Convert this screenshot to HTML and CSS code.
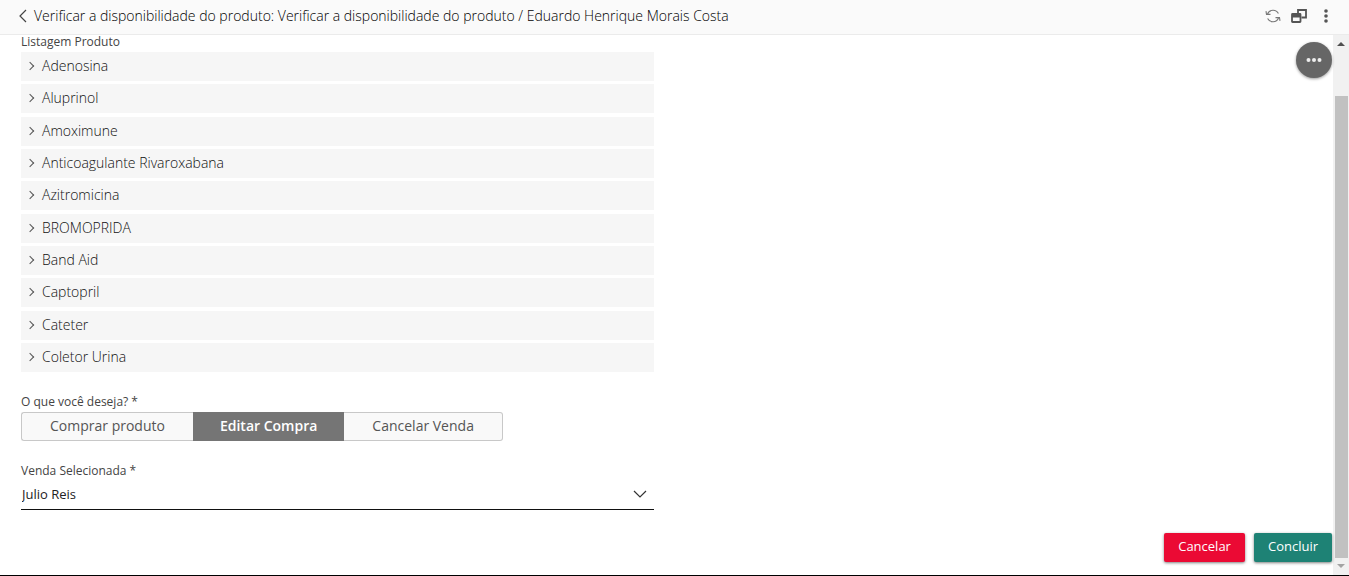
FILE: index.html
```html
<!DOCTYPE html>
<html lang="pt-BR">
<head>
<meta charset="utf-8">
<title>Verificar a disponibilidade do produto</title>
<link rel="stylesheet" href="styles.css">
</head>
<body>
<div class="page">
  <header class="topbar">
    <button class="icon-btn back" type="button" aria-label="Voltar"><svg width="10" height="14" viewBox="0 0 10 14"><path d="M8 1 2 7l6 6" fill="none" stroke="#444" stroke-width="1.2"/></svg></button>
    <h1 class="title">Verificar a disponibilidade do produto: Verificar a disponibilidade do produto / Eduardo Henrique Morais Costa</h1>
    <div class="tools">
      <button class="icon-btn" type="button" aria-label="Atualizar"><svg width="16" height="14" viewBox="0 0 16 14" fill="none" stroke="#777" stroke-width="1.1"><path d="M2.500 5A6 6 0 0 1 13.400 4.500M13.500 9A6 6 0 0 1 2.600 9.500M1 2.200 1.500 5.400H5.500M15 11.800 14.500 8.600H10.500"/></svg></button>
      <button class="icon-btn" type="button" aria-label="Abrir em nova janela"><svg width="16" height="14" viewBox="0 0 16 14"><path d="M7 4V1h8v7.500h-4.500" fill="none" stroke="#555" stroke-width="1.8"/><rect x="1" y="5" width="8.500" height="8" rx=".5" fill="#fafafa" stroke="#555" stroke-width="1.800"/><path d="M1 5h8.500v3.500H1z" fill="#555"/></svg></button>
      <button class="icon-btn" type="button" aria-label="Mais opções"><svg width="4" height="14" viewBox="0 0 4 14" fill="#555"><circle cx="2" cy="2" r="1.800"/><circle cx="2" cy="7" r="1.800"/><circle cx="2" cy="12" r="1.800"/></svg></button>
    </div>
  </header>
  <div class="body">
    <main class="content">
      <form class="form" id="form">
        <section class="field">
          <h2 class="label">Listagem Produto</h2>
          <div class="products">
            <button class="product" type="button"><span class="chevron"></span>Adenosina</button>
            <button class="product" type="button"><span class="chevron"></span>Aluprinol</button>
            <button class="product" type="button"><span class="chevron"></span>Amoximune</button>
            <button class="product" type="button"><span class="chevron"></span>Anticoagulante Rivaroxabana</button>
            <button class="product" type="button"><span class="chevron"></span>Azitromicina</button>
            <button class="product" type="button"><span class="chevron"></span>BROMOPRIDA</button>
            <button class="product" type="button"><span class="chevron"></span>Band Aid</button>
            <button class="product" type="button"><span class="chevron"></span>Captopril</button>
            <button class="product" type="button"><span class="chevron"></span>Cateter</button>
            <button class="product" type="button"><span class="chevron"></span>Coletor Urina</button>
          </div>
        </section>
        <section class="field">
          <h2 class="label" id="wish">O que você deseja? *</h2>
          <div class="options" role="group" aria-labelledby="wish">
            <button class="option" type="button">Comprar produto</button>
            <button class="option selected" type="button" aria-pressed="true">Editar Compra</button>
            <button class="option" type="button">Cancelar Venda</button>
          </div>
        </section>
        <section class="field">
          <label class="label" for="sale">Venda Selecionada *</label>
          <div class="select-box">
            <select class="select" id="sale"><option>Julio Reis</option></select>
            <svg class="arrow" width="14" height="8" viewBox="0 0 14 8"><path d="M1 1l6 6 6-6" fill="none" stroke="#333" stroke-width="1.200"/></svg>
          </div>
        </section>
      </form>
      <button class="fab" type="button" aria-label="Ações"><svg width="16" height="4" viewBox="0 0 16 4" fill="#eee"><circle cx="2.500" cy="2" r="2"/><circle cx="8" cy="2" r="2"/><circle cx="13.500" cy="2" r="2"/></svg></button>
      <footer class="actions">
        <button class="action cancel" type="button">Cancelar</button>
        <button class="action finish" type="submit" form="form">Concluir</button>
      </footer>
    </main>
    <div class="scrollbar" aria-hidden="true">
      <span class="tri up"></span>
      <span class="thumb"></span>
      <span class="tri down"></span>
    </div>
  </div>
</div>
</body>
</html>
```

FILE: styles.css
```css
* { box-sizing: border-box; }
body {
  margin: 0;
  background: #fff;
  color: #222;
  font-family: "Open Sans", sans-serif;
  font-size: 14px;
}
button, select { font: inherit; color: inherit; }
button { margin: 0; padding: 0; border: 0; cursor: pointer; }
svg { display: block; }

.page {
  display: flex;
  flex-direction: column;
  min-height: 100vh;
  border-bottom: 1px solid #000;
}
.topbar {
  display: flex;
  align-items: center;
  padding: 5px 21px 7px 18px;
  background: #fafafa;
  border-bottom: 1px solid #ebebeb;
}
.icon-btn { background: none; }
.back { margin-right: 6px; }
.title {
  flex: 1;
  margin: 0;
  font-size: 14px;
  font-weight: 300;
  line-height: 22px;
  color: #000;
}
.tools { display: flex; align-items: center; gap: 10px; }
.tools .icon-btn:last-child { margin-left: 7px; }

.body { display: flex; flex: 1; }
.content {
  position: relative;
  display: flex;
  flex: 1;
  flex-direction: column;
  justify-content: space-between;
}
.form {
  display: grid;
  grid-template-columns: 1fr 1fr;
  column-gap: 25px;
  row-gap: 23px;
  padding: 0 21px;
}
.field { grid-column: 1; }
.label {
  display: block;
  margin: 0;
  padding-bottom: 3px;
  font-size: 12px;
  font-weight: 400;
  line-height: 14px;
  color: #444;
}
.products {
  display: flex;
  flex-direction: column;
  justify-content: space-between;
  min-height: 320px;
}
.product {
  display: flex;
  align-items: center;
  gap: 9px;
  padding: 0 0 1px 7px;
  background: #f6f6f6;
  color: #111;
  font-weight: 300;
  line-height: 28px;
  text-align: left;
}
.chevron {
  width: 6px;
  height: 6px;
  margin-left: -1px;
  border: solid #555;
  border-width: 1px 1px 0 0;
  transform: rotate(45deg);
}

.options { display: flex; }
.option {
  padding: 0 28px 2px;
  background: #f9f9f9;
  border: 1px solid #c8c8c8;
  color: #555;
  line-height: 25px;
}
.option:first-child { border-right: 0; border-radius: 3px 0 0 3px; }
.option:last-child { border-left: 0; border-radius: 0 3px 3px 0; }
.option.selected {
  padding: 0 26px 2px;
  background: #757575;
  border-color: #757575;
  color: #fff;
  font-weight: 600;
}

.select-box { position: relative; }
.select {
  display: block;
  width: 100%;
  height: 29px;
  padding: 0 32px 3px 1px;
  appearance: none;
  background: none;
  border: 0;
  border-bottom: 1px solid #111;
  border-radius: 0;
  font-size: 13px;
  outline: 0;
}
.arrow { position: absolute; right: 7px; top: 9px; pointer-events: none; }

.fab {
  position: absolute;
  top: 7px;
  right: 1px;
  display: grid;
  place-items: center;
  width: 36px;
  height: 36px;
  border-radius: 50%;
  background: #666;
  box-shadow: 0 1px 3px rgba(0, 0, 0, .4);
}

.actions {
  display: flex;
  justify-content: flex-end;
  gap: 9px;
  padding: 0 1px 13px 0;
}
.action {
  padding: 0 14px 2px;
  border-radius: 2px;
  color: #fff;
  font-size: 13px;
  line-height: 27px;
  box-shadow: 0 1px 3px rgba(0, 0, 0, .5);
}
.cancel { background: #eb0a34; }
.finish { background: #1e8275; }

.scrollbar {
  display: flex;
  flex-direction: column;
  align-items: center;
  justify-content: space-between;
  width: 16px;
  padding: 7px 0;
  background: #f1f1f1;
}
.tri { border: 4px solid transparent; }
.up { border-top: 0; border-bottom-color: #505050; }
.down { border-bottom: 0; border-top-color: #a3a3a3; }
.thumb {
  flex: 1;
  width: 13px;
  margin: 50px 0 6px;
  background: #c1c1c1;
}
```
